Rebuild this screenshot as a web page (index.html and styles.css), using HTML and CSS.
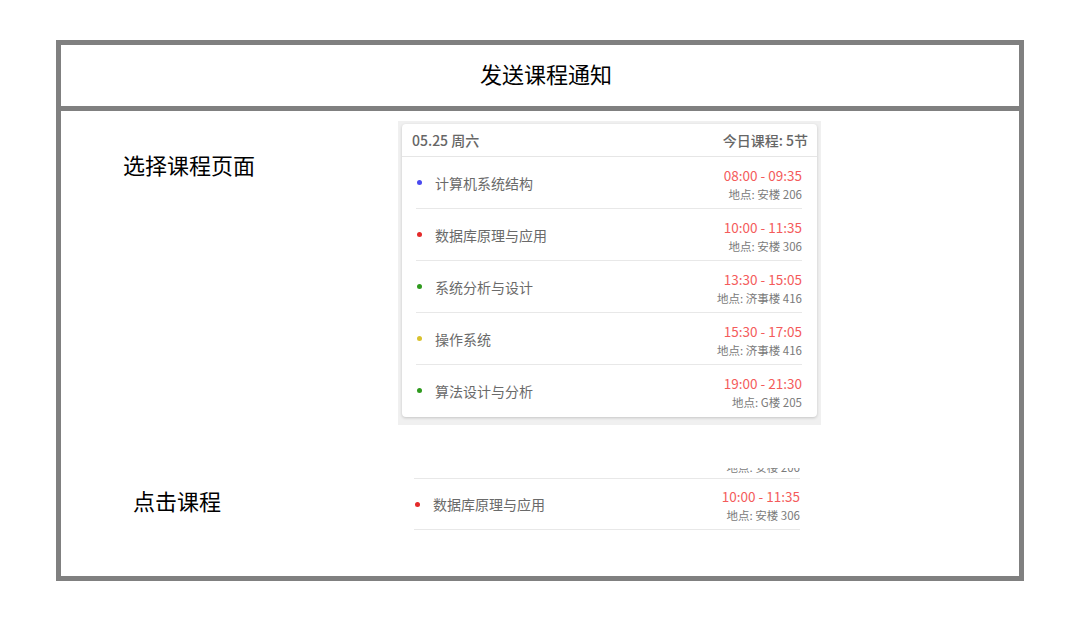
FILE: index.html
```html
<!DOCTYPE html>
<html lang="zh">
<head>
<meta charset="utf-8">
<title>发送课程通知</title>
<link rel="stylesheet" href="styles.css">
</head>
<body>
<div class="frame">
  <div class="frame-head">发送课程通知</div>
  <div class="frame-body">
    <div class="label label-1">选择课程页面</div>
    <div class="shot">
      <div class="card">
        <div class="card-head">
          <span>05.25 周六</span>
          <span>今日课程: 5节</span>
        </div>
        <div class="row">
          <span class="dot dot-blue"></span>
          <span class="name">计算机系统结构</span>
          <div class="info"><div class="time">08:00 - 09:35</div><div class="place">地点: 安楼 206</div></div>
        </div>
        <div class="row">
          <span class="dot dot-red"></span>
          <span class="name">数据库原理与应用</span>
          <div class="info"><div class="time">10:00 - 11:35</div><div class="place">地点: 安楼 306</div></div>
        </div>
        <div class="row">
          <span class="dot dot-green"></span>
          <span class="name">系统分析与设计</span>
          <div class="info"><div class="time">13:30 - 15:05</div><div class="place">地点: 济事楼 416</div></div>
        </div>
        <div class="row">
          <span class="dot dot-yellow"></span>
          <span class="name">操作系统</span>
          <div class="info"><div class="time">15:30 - 17:05</div><div class="place">地点: 济事楼 416</div></div>
        </div>
        <div class="row">
          <span class="dot dot-green"></span>
          <span class="name">算法设计与分析</span>
          <div class="info"><div class="time">19:00 - 21:30</div><div class="place">地点: G楼 205</div></div>
        </div>
      </div>
    </div>
    <div class="label label-2">点击课程</div>
    <div class="snippet">
      <div class="clip"><div class="clip-text">地点: 安楼 206</div></div>
      <div class="row row-snip">
        <span class="dot dot-red"></span>
        <span class="name">数据库原理与应用</span>
        <div class="info"><div class="time">10:00 - 11:35</div><div class="place">地点: 安楼 306</div></div>
      </div>
    </div>
  </div>
</div>
</body>
</html>
```

FILE: styles.css
```css
* { box-sizing: border-box; }
body {
  margin: 0;
  background: #ffffff;
  font-family: "Noto Sans CJK SC", "Noto Sans", sans-serif;
}
.frame {
  margin: 40px 0 0 56px;
  width: 968px;
  height: 541px;
  border: 5px solid #808080;
  display: flex;
  flex-direction: column;
}
.frame-head {
  height: 66px;
  border-bottom: 5px solid #808080;
  display: flex;
  align-items: center;
  justify-content: center;
  padding: 0 0 5px 12px;
  font-size: 22px;
  color: #000;
}
.frame-body {
  flex: 1;
  display: grid;
  grid-template-columns: 337px 1fr;
  grid-template-rows: auto auto;
  align-content: start;
}
.label {
  font-size: 22px;
  line-height: 30px;
  color: #000;
}
.label-1 { padding: 38px 0 0 62px; }
.label-2 { padding: 60px 0 0 72px; }
.shot {
  margin-top: 10px;
  width: 423px;
  padding: 3px 4px 8px 4px;
  background: #f0f0f0;
}
.card {
  background: #fff;
  border-radius: 4px;
  box-shadow: 0 1px 3px rgba(0,0,0,0.18);
  padding-bottom: 1px;
}
.card-head {
  height: 33px;
  padding: 0 9px 0 10px;
  display: flex;
  align-items: center;
  justify-content: space-between;
  border-bottom: 1px solid #e6e6e6;
  font-size: 14px;
  font-weight: 500;
  color: #666;
}
.row {
  margin: 0 15px 0 14px;
  height: 52px;
  display: flex;
  align-items: center;
  border-bottom: 1px solid #e8e8e8;
}
.card .row:last-child { border-bottom: none; height: 51px; }
.dot {
  width: 5px;
  height: 5px;
  border-radius: 50%;
  margin: 0 13px 0 1px;
  flex: none;
}
.dot-blue { background: #4a4af0; }
.dot-red { background: #e42a2a; }
.dot-green { background: #2f9a1e; }
.dot-yellow { background: #d9c22e; }
.name {
  flex: 1;
  font-size: 14px;
  color: #6a6a6a;
}
.info {
  text-align: right;
  padding-top: 3px;
}
.time {
  font-size: 13.5px;
  line-height: 19px;
  color: #f45b5b;
}
.place {
  font-size: 11.5px;
  line-height: 18px;
  color: #7a7a7a;
}
.snippet {
  grid-column: 2;
  margin: 43px 0 0 16px;
  width: 386px;
}
.clip {
  height: 11px;
  overflow: hidden;
  border-bottom: 1px solid #e8e8e8;
}
.clip-text {
  margin-top: -9px;
  line-height: 16px;
  font-size: 11.5px;
  color: #7a7a7a;
  text-align: right;
}
.row-snip {
  margin: 0;
  height: 51px;
}
```
